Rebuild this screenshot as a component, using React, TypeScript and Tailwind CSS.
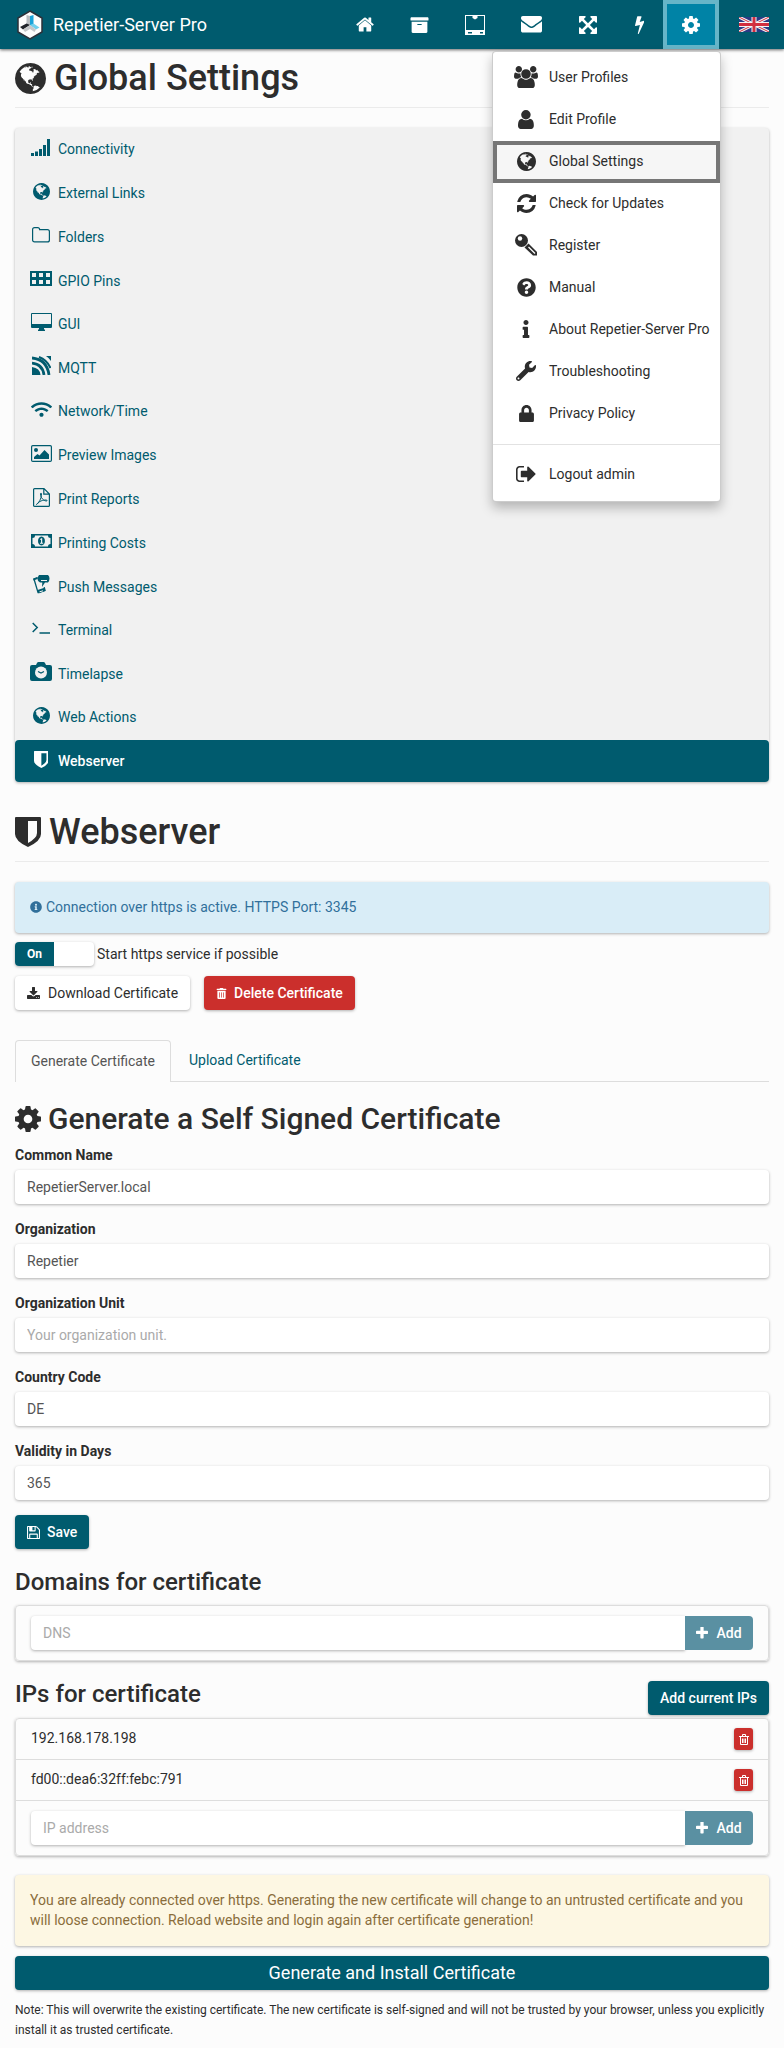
import React, { useState } from 'react';
import {
    FaArchive,
    FaInfo,
    FaInfoCircle,
    FaLock,
    FaQuestionCircle,
    FaTrashAlt,
    FaWifi,
    FaWrench,
} from 'react-icons/fa';

type IconProps = { className?: string };

const paths = {
    home: 'M1472 992v480q0 26-19 45t-45 19h-384v-384h-256v384h-384q-26 0-45-19t-19-45v-480q0-1 .5-3t.5-3l575-474 575 474q1 2 1 6zm223-69l-62 74q-8 9-21 11h-3q-13 0-21-7l-692-577-692 577q-12 8-24 7-13-2-21-11l-62-74q-8-10-7-23.500t11-21.500l719-599q32-26 76-26t76 26l244 204v-195q0-14 9-23t23-9h192q14 0 23 9t9 23v408l219 182q10 8 11 21.500t-7 23.500z',
    cog: 'M1152 896q0-106-75-181t-181-75-181 75-75 181 75 181 181 75 181-75 75-181zm512-109v222q0 12-8 23t-20 13l-185 28q-19 54-39 91 35 50 107 138 10 12 10 25t-9 23q-27 37-99 108t-94 71q-12 0-26-9l-138-108q-44 23-91 38-16 136-29 186-7 28-36 28h-222q-14 0-24.500-8.500t-11.500-21.500l-28-184q-49-16-90-37l-141 107q-10 9-25 9-14 0-25-11-126-114-165-168-7-10-7-23 0-12 8-23 15-21 51-66.500t54-70.500q-27-50-41-99l-183-27q-13-2-21-12.500t-8-23.500v-222q0-12 8-23t19-13l186-28q14-46 39-92-40-57-107-138-10-12-10-24 0-10 9-23 26-36 98.500-107.500t94.500-71.500q13 0 26 10l138 107q44-23 91-38 16-136 29-186 7-28 36-28h222q14 0 24.500 8.500t11.500 21.500l28 184q49 16 90 37l142-107q9-9 24-9 13 0 25 10 129 119 165 170 7 8 7 22 0 12-8 23-15 21-51 66.500t-54 70.500q26 50 41 98l183 28q13 2 21 12.500t8 23.500z',
    envelope: 'M1792 710v794q0 66-47 113t-113 47h-1472q-66 0-113-47t-47-113v-794q44 49 101 87 362 246 497 345 57 42 92.500 65.500t94.500 48 110 24.500h2q51 0 110-24.500t94.500-48 92.500-65.500q170-123 498-345 57-39 100-87zm0-294q0 79-49 151t-122 123q-376 261-468 325-10 7-42.500 30.500t-54 38-52 32.500-57.500 27-50 9h-2q-23 0-50-9t-57.500-27-52-32.500-54-38-42.500-30.500q-91-64-262-182.500t-205-142.500q-62-42-117-115.500t-55-136.500q0-78 41.500-130t118.500-52h1472q65 0 112.500 47t47.500 113z',
    arrows: 'M1411 541l-355 355 355 355 144-144q29-31 70-14 39 17 39 59v448q0 26-19 45t-45 19h-448q-42 0-59-40-17-39 14-69l144-144-355-355-355 355 144 144q31 30 14 69-17 40-59 40h-448q-26 0-45-19t-19-45v-448q0-42 40-59 39-17 69 14l144 144 355-355-355-355-144 144q-19 19-45 19-12 0-24-5-40-17-40-59v-448q0-26 19-45t45-19h448q42 0 59 40 17 39-14 69l-144 144 355 355 355-355-144-144q-31-30-14-69 17-40 59-40h448q26 0 45 19t19 45v448q0 42-39 59-13 5-25 5-26 0-45-19z',
    bolt: 'M1333 566q18 20 7 44l-540 1157q-13 25-42 25-4 0-14-2-17-5-25.500-19t-4.500-30l197-808-406 101q-4 1-12 1-18 0-31-11-18-15-13-39l201-825q4-14 16-23t28-9h328q19 0 32 12.500t13 29.500q0 8-5 18l-171 463 396-98q8-2 12-2 19 0 34 15z',
    globe: 'M896 128q209 0 385.500 103t279.500 279.500 103 385.500-103 385.500-279.500 279.500-385.500 103-385.500-103-279.500-279.500-103-385.500 103-385.500 279.500-279.500 385.500-103zm274 521q-2 1-9.500 9.500t-13.500 9.500q2 0 4.500-5t5-11 3.500-7q6-7 22-15 14-6 52-12 34-8 51 11-2-2 9.500-13t14.500-12q3-2 15-4.500t15-7.500l2-22q-12 1-17.500-7t-6.500-21q0 2-6 8 0-7-4.500-8t-11.500 1-9 1q-10-3-15-7.500t-8-16.500-4-15q-2-5-9.500-11t-9.500-10q-1-2-2.500-5.500t-3-6.500-4-5.500-5.500-2.500-7 5-7.500 10-4.500 5q-3-2-6-1.500t-4.500 1-4.500 3-5 3.500q-3 2-8.500 3t-8.500 2q15-5-1-11-10-4-16-3 9-4 7.500-12t-8.500-14h5q-1-4-8.500-8.500t-17.500-8.500-13-6q-8-5-34-9.500t-33-.5q-5 6-4.500 10.500t4 14 3.500 12.500q1 6-5.500 13t-6.500 12q0 7 14 15.500t10 21.500q-3 8-16 16t-16 12q-5 8-1.500 18.500t10.500 16.500q2 2 1.500 4t-3.500 4.500-5.500 4-6.500 3.500l-3 2q-11 5-20.500-6t-13.500-26q-7-25-16-30-23-8-29 1-5-13-41-26-25-9-58-4 6-1 0-15-7-15-19-12 3-6 4-17.500t1-13.500q3-13 12-23 1-1 7-8.500t9.500-13.500.5-6q35 4 50-11 5-5 11.500-17t10.500-17q9-6 14-5.500t14.500 5.500 14.500 5q14 1 15.500-11t-7.500-20q12 1 3-17-4-7-8-9-12-4-27 5-8 4 2 8-1-1-9.500 10.500t-16.500 17.500-16-5q-1-1-5.500-13.500t-9.500-13.500q-8 0-16 15 3-8-11-15t-24-8q19-12-8-27-7-4-20.500-5t-19.500 4q-5 7-5.500 11.500t5 8 10.500 5.500 11.500 4 8.500 3q14 10 8 14-2 1-8.500 3.500t-11.500 4.500-6 4q-3 4 0 14t-2 14q-5-5-9-17.500t-7-16.500q7 9-25 6l-10-1q-4 0-16 2t-20.500 1-13.500-8q-4-8 0-20 1-4 4-2-4-3-11-9.500t-10-8.500q-46 15-94 41 6 1 12-1 5-2 13-6.500t10-5.500q34-14 42-7l5-5q14 16 20 25-7-4-30-1-20 6-22 12 7 12 5 18-4-3-11.500-10t-14.500-11-15-5q-16 0-22 1-146 80-235 222 7 7 12 8 4 1 5 9t2.500 11 11.500-3q9 8 3 19 1-1 44 27 19 17 21 21 3 11-10 18-1-2-9-9t-9-4q-3 5 .5 18.500t10.500 12.500q-7 0-9.500 16t-2.500 35.500-1 23.500l2 1q-3 12 5.500 34.500t21.500 19.500q-13 3 20 43 6 8 8 9 3 2 12 7.500t15 10 10 10.500q4 5 10 22.500t14 23.500q-2 6 9.500 20t10.500 23q-1 0-2.500 1t-2.500 1q3 7 15.500 14t15.500 13q1 3 2 10t3 11 8 2q2-20-24-62-15-25-17-29-3-5-5.500-15.500t-4.500-14.500q2 0 6 1.500t8.500 3.500 7.500 4 2 3q-3 7 2 17.500t12 18.500 17 19 12 13q6 6 14 19.500t0 13.500q9 0 20 10t17 20q5 8 8 26t5 24q2 7 8.500 13.500t12.500 9.500l16 8 13 7q5 2 18.500 10.500t21.500 11.500q10 4 16 4t14.500-2.500 13.500-3.500q15-2 29 15t21 21q36 19 55 11-2 1 .5 7.500t8 15.500 9 14.500 5.500 8.500q5 6 18 15t18 15q6-4 7-9-3 8 7 20t18 10q14-3 14-32-31 15-49-18 0-1-2.500-5.500t-4-8.500-2.500-8.500 0-7.500 5-3q9 0 10-3.500t-2-12.500-4-13q-1-8-11-20t-12-15q-5 9-16 8t-16-9q0 1-1.500 5.500t-1.500 6.500q-13 0-15-1 1-3 2.500-17.500t3.500-22.500q1-4 5.500-12t7.500-14.500 4-12.500-4.500-9.500-17.500-2.500q-19 1-26 20-1 3-3 10.500t-5 11.500-9 7q-7 3-24 2t-24-5q-13-8-22.500-29t-9.500-37q0-10 2.500-26.500t3-25-5.500-24.500q3-2 9-9.500t10-10.500q2-1 4.500-1.500t4.500 0 4-1.500 3-6q-1-1-4-3-3-3-4-3 7 3 28.500-1.500t27.500 1.500q15 11 22-2 0-1-2.500-9.500t-.5-13.500q5 27 29 9 3 3 15.500 5t17.500 5q3 2 7 5.500t5.500 4.500 5-.5 8.500-6.500q10 14 12 24 11 40 19 44 7 3 11 2t4.500-9.500 0-14-1.500-12.500l-1-8v-18l-1-8q-15-3-18.500-12t1.500-18.500 15-18.500q1-1 8-3.500t15.500-6.500 12.500-8q21-19 15-35 7 0 11-9-1 0-5-3t-7.500-5-4.500-2q9-5 2-16 5-3 7.500-11t7.500-10q9 12 21 2 7-8 1-16 5-7 20.500-10.500t18.500-9.500q7 2 8-2t1-12 3-12q4-5 15-9t13-5l17-11q3-4 0-4 18 2 31-11 10-11-6-20 3-6-3-9.500t-15-5.500q3-1 11.500-.5t10.500-1.500q15-10-7-16-17-5-43 12zm-163 877q206-36 351-189-3-3-12.500-4.500t-12.500-3.500q-18-7-24-8 1-7-2.500-13t-8-9-12.500-8-11-7q-2-2-7-6t-7-5.500-7.500-4.500-8.500-2-10 1l-3 1q-3 1-5.500 2.500t-5.500 3-4 3 0 2.500q-21-17-36-22-5-1-11-5.500t-10.500-7-10-1.500-11.500 7q-5 5-6 15t-2 13q-7-5 0-17.500t2-18.500q-3-6-10.500-4.500t-12 4.500-11.500 8.500-9 6.500-8.500 5.500-8.500 7.500q-3 4-6 12t-5 11q-2-4-11.500-6.500t-9.500-5.500q2 10 4 35t5 38q7 31-12 48-27 25-29 40-4 22 12 26 0 7-8 20.500t-7 21.500q0 6 2 16z',
    users: 'M593 896q-162 5-265 128h-134q-82 0-138-40.500t-56-118.500q0-353 124-353 6 0 43.500 21t97.500 42.500 119 21.500q67 0 133-23-5 37-5 66 0 139 81 256zm1071 637q0 120-73 189.500t-194 69.500h-874q-121 0-194-69.500t-73-189.500q0-53 3.500-103.500t14-109 26.500-108.500 43-97.500 62-81 85.500-53.500 111.500-20q10 0 43 21.500t73 48 107 48 135 21.500 135-21.500 107-48 73-48 43-21.500q61 0 111.500 20t85.500 53.500 62 81 43 97.500 26.500 108.500 14 109 3.500 103.500zm-1024-1277q0 106-75 181t-181 75-181-75-75-181 75-181 181-75 181 75 75 181zm704 384q0 159-112.500 271.500t-271.500 112.500-271.500-112.500-112.500-271.500 112.500-271.500 271.500-112.500 271.500 112.500 112.500 271.500zm576 225q0 78-56 118.500t-138 40.500h-134q-103-123-265-128 81-117 81-256 0-29-5-66 66 23 133 23 59 0 119-21.500t97.500-42.500 43.500-21q124 0 124 353zm-128-609q0 106-75 181t-181 75-181-75-75-181 75-181 181-75 181 75 75 181z',
    user: 'M1536 1399q0 109-62.500 187t-150.500 78h-854q-88 0-150.500-78t-62.500-187q0-85 8.500-160.500t31.500-152 58.500-131 94-89 134.500-34.500q131 128 313 128t313-128q76 0 134.500 34.500t94 89 58.500 131 31.500 152 8.500 160.500zm-256-887q0 159-112.500 271.500t-271.500 112.500-271.500-112.500-112.500-271.500 112.500-271.500 271.500-112.500 271.500 112.500 112.500 271.500z',
    refresh: 'M1639 1056q0 5-1 7-64 268-268 434.500t-478 166.500q-146 0-282.500-55t-243.500-157l-129 129q-19 19-45 19t-45-19-19-45v-448q0-26 19-45t45-19h448q26 0 45 19t19 45-19 45l-137 137q71 66 161 102t187 36q134 0 250-65t186-179q11-17 53-117 8-23 30-23h192q13 0 22.500 9.500t9.500 22.500zm25-800v448q0 26-19 45t-45 19h-448q-26 0-45-19t-19-45 19-45l138-138q-148-137-349-137-134 0-250 65t-186 179q-11 17-53 117-8 23-30 23h-199q-13 0-22.500-9.500t-9.500-22.500v-7q65-268 270-434.500t480-166.500q146 0 284 55.500t245 156.500l130-129q19-19 45-19t45 19 19 45z',
    signOut: 'M704 1440q0 4 1 20t.5 26.500-3 23.500-10 19.500-20.500 6.500h-320q-119 0-203.500-84.500t-84.500-203.500v-704q0-119 84.500-203.500t203.500-84.500h320q13 0 22.500 9.500t9.500 22.500q0 4 1 20t.5 26.500-3 23.500-10 19.500-20.500 6.500h-320q-66 0-113 47t-47 113v704q0 66 47 113t113 47h312l11.500 1 11.500 3 8 5.500 7 9 2 13.500zm928-544q0 26-19 45l-544 544q-19 19-45 19t-45-19-19-45v-288h-448q-26 0-45-19t-19-45v-384q0-26 19-45t45-19h448v-288q0-26 19-45t45-19 45 19l544 544q19 19 19 45z',
    plus: 'M1600 736v192q0 40-28 68t-68 28h-416v416q0 40-28 68t-68 28h-192q-40 0-68-28t-28-68v-416h-416q-40 0-68-28t-28-68v-192q0-40 28-68t68-28h416v-416q0-40 28-68t68-28h192q40 0 68 28t28 68v416h416q40 0 68 28t28 68z',
    download: 'M1344 1344q0-26-19-45t-45-19-45 19-19 45 19 45 45 19 45-19 19-45zm256 0q0-26-19-45t-45-19-45 19-19 45 19 45 45 19 45-19 19-45zm128-224v320q0 40-28 68t-68 28h-1472q-40 0-68-28t-28-68v-320q0-40 28-68t68-28h465l135 136q58 56 136 56t136-56l136-136h464q40 0 68 28t28 68zm-325-569q17 41-14 70l-448 448q-18 19-45 19t-45-19l-448-448q-31-29-14-70 17-39 59-39h256v-448q0-26 19-45t45-19h256q26 0 45 19t19 45v448h256q42 0 59 39z',
    save: 'M512 1536h768v-384h-768v384zm896 0h128v-896q0-14-10-38.500t-20-34.500l-281-281q-10-10-34-20t-39-10v416q0 40-28 68t-68 28h-576q-40 0-68-28t-28-68v-416h-128v1280h128v-416q0-40 28-68t68-28h832q40 0 68 28t28 68v416zm-384-928v-320q0-13-9.500-22.500t-22.500-9.500h-192q-13 0-22.500 9.500t-9.500 22.500v320q0 13 9.500 22.500t22.500 9.500h192q13 0 22.500-9.500t9.500-22.500zm640 32v928q0 40-28 68t-68 28h-1344q-40 0-68-28t-28-68v-1344q0-40 28-68t68-28h928q40 0 88 20t76 48l280 280q28 28 48 76t20 88z',
};

// viewBox defaults to the common 1792 glyph grid
const Glyph: React.FC<IconProps & { name: keyof typeof paths; box?: string }> = ({ name, box = '0 0 1792 1792', className }) => (
    <svg viewBox={box} fill="currentColor" className={className} aria-hidden="true">
        <path d={paths[name]} />
    </svg>
);

const HomeIcon: React.FC<IconProps> = (p) => <Glyph name="home" box="64 200 1664 1400" {...p} />;
const CogIcon: React.FC<IconProps> = (p) => <Glyph name="cog" box="128 128 1536 1536" {...p} />;
const GlobeIcon: React.FC<IconProps> = (p) => <Glyph name="globe" box="128 128 1536 1536" {...p} />;
const EnvelopeIcon: React.FC<IconProps> = (p) => <Glyph name="envelope" box="0 256 1792 1408" {...p} />;
const ArrowsIcon: React.FC<IconProps> = (p) => <Glyph name="arrows" box="128 128 1536 1536" {...p} />;
const BoltIcon: React.FC<IconProps> = (p) => <Glyph name="bolt" box="448 0 900 1792" {...p} />;
const UsersIcon: React.FC<IconProps> = (p) => <Glyph name="users" box="0 0 1920 1792" {...p} />;
const UserIcon: React.FC<IconProps> = (p) => <Glyph name="user" box="256 128 1280 1536" {...p} />;
const RefreshIcon: React.FC<IconProps> = (p) => <Glyph name="refresh" box="128 128 1536 1536" {...p} />;
const SignOutIcon: React.FC<IconProps> = (p) => <Glyph name="signOut" box="64 256 1600 1280" {...p} />;
const PlusIcon: React.FC<IconProps> = (p) => <Glyph name="plus" box="192 192 1408 1408" {...p} />;
const DownloadIcon: React.FC<IconProps> = (p) => <Glyph name="download" box="64 0 1664 1536" {...p} />;
const SaveIcon: React.FC<IconProps> = (p) => <Glyph name="save" box="128 128 1536 1536" {...p} />;

const ShieldIcon: React.FC<IconProps> = ({ className }) => (
    <svg viewBox="0 0 26 30" fill="currentColor" fillRule="evenodd" className={className} aria-hidden="true">
        <path d="M1 0H25Q26 0 26 1V17Q26 24 13 30Q0 24 0 17V1Q0 0 1 0ZM13 4V26Q22 21 22 16V4Z" />
    </svg>
);

const SignalIcon: React.FC<IconProps> = ({ className }) => (
    <svg viewBox="0 0 20 17" fill="currentColor" className={className} aria-hidden="true">
        <path d="M0 14h3v3H0zM4 12.500h3V17H4zM8 10h3v7H8zM12 6h3v11h-3zM16 0h3v17h-3z" />
    </svg>
);

const FolderIcon: React.FC<IconProps> = ({ className }) => (
    <svg viewBox="0 0 18 16" fill="none" stroke="currentColor" strokeWidth="1.200" className={className} aria-hidden="true">
        <path d="M.6 2.600q0-2 2-2h3q2 0 2 2h7.800q2 0 2 2v8.300q0 2-2 2H2.600q-2 0-2-2z" />
    </svg>
);

const GridIcon: React.FC<IconProps> = ({ className }) => (
    <svg viewBox="0 0 22 15" fill="currentColor" fillRule="evenodd" className={className} aria-hidden="true">
        <path d="M0 0h22v15H0zM2 2v4h4V2zM9 2v4h4V2zM16 2v4h4V2zM2 9v4h4V9zM9 9v4h4V9zM16 9v4h4V9z" />
    </svg>
);

const DesktopIcon: React.FC<IconProps> = ({ className }) => (
    <svg viewBox="0 0 21 18" fill="currentColor" fillRule="evenodd" className={className} aria-hidden="true">
        <path d="M1 0h19q1 0 1 1v13q0 1-1 1h-7v1l1 1v1H7v-1l1-1v-1H1q-1 0-1-1V1q0-1 1-1zM1 1v10h19V1z" />
    </svg>
);

const MqttIcon: React.FC<IconProps> = ({ className }) => (
    <svg viewBox="0 0 19 19" className={className} aria-hidden="true">
        <path d="M0 11q8 1 8.500 8H0zM14 0h5v5q-2-3-5-5z" fill="currentColor" />
        <path d="M0 7.200Q10.500 8 12 19M0 2Q15 3.500 17 19" fill="none" stroke="currentColor" strokeWidth="2.800" />
        <path d="M7 1Q15 4 18.500 12" fill="none" stroke="currentColor" strokeWidth="2" />
    </svg>
);

const ImageIcon: React.FC<IconProps> = ({ className }) => (
    <svg viewBox="0 0 21 17" className={className} aria-hidden="true">
        <rect x=".6" y=".6" width="19.800" height="15.800" rx="1.200" fill="none" stroke="currentColor" strokeWidth="1.200" />
        <circle cx="5" cy="5" r="2" fill="currentColor" />
        <path d="M3 14v-2l3.500-3 2 1.500L13.500 5 18 9.500V14z" fill="currentColor" />
    </svg>
);

const PdfIcon: React.FC<IconProps> = ({ className }) => (
    <svg viewBox="0 0 17 19" fill="none" stroke="currentColor" strokeWidth="1.200" className={className} aria-hidden="true">
        <path d="M1.600.6h9.400l5.400 5.400v11.400q0 1-1 1H1.600q-1 0-1-1V1.600q0-1 1-1zM10.800.6v5.600h5.600" />
        <path d="M3.500 16.500c2-1 5-6 5-10.500 0-1.200-1-1.200-1 0 0 3.500 3 7 6 7 1 0 .8-1-.5-1-3 0-7 1-9.500 4.500z" strokeWidth="1" />
    </svg>
);

const MoneyIcon: React.FC<IconProps> = ({ className }) => (
    <svg viewBox="0 0 21 14" fill="currentColor" fillRule="evenodd" className={className} aria-hidden="true">
        <path d="M0 0h21v14H0zM4 1.500Q4 4 1.500 4v6Q4 10 4 12.500h13Q17 10 19.500 10V4Q17 4 17 1.500z" />
        <path d="M10.500 2.500c4.600 0 4.600 9 0 9s-4.600-9 0-9zM9 5.200l.6.800.4-.3v3.100H9v1h3.200v-1h-1V4.200h-1z" />
    </svg>
);

const PushIcon: React.FC<IconProps> = ({ className }) => (
    <svg viewBox="0 0 17 19" fill="currentColor" className={className} aria-hidden="true">
        <path d="M1 4l3.500-1.200M1 4l4 13.500 7-2.300-.8-3" fill="none" stroke="currentColor" strokeWidth="1.300" />
        <path d="M4.500 15l7-2.300 1 3.300-7 2.500zM0 3.500l4.500-1.500v2L.5 5.500z" />
        <path d="M6 0h9q1.500 1 1.500 3.500T15 7.500h-3L9 12l.3-4.500H7Q4.500 6 4.500 4T6 0z" />
        <path d="M8 5.500h6M6.500 16.800l3.500-1" stroke="#f1f1f1" strokeWidth="1" />
    </svg>
);

const TerminalIcon: React.FC<IconProps> = ({ className }) => (
    <svg viewBox="0 0 18 12" fill="none" stroke="currentColor" strokeWidth="1.500" className={className} aria-hidden="true">
        <path d="M.7 1l4.500 4.500L.7 10M7.500 11H18" />
    </svg>
);

const CameraIcon: React.FC<IconProps> = ({ className }) => (
    <svg viewBox="0 0 22 19" className={className} aria-hidden="true">
        <path d="M2 3h4l1-2q.5-1 1.500-1h5q1 0 1.500 1l1 2h4q2 0 2 2v12q0 2-2 2H2q-2 0-2-2V5q0-2 2-2z" fill="currentColor" />
        <circle cx="11" cy="10.500" r="6" fill="#f1f1f1" />
        <path d="M8 9.500l3 1.500 3-1.500" fill="none" stroke="currentColor" strokeWidth="1.200" />
    </svg>
);

const TrashIcon: React.FC<IconProps> = ({ className }) => (
    <svg viewBox="0 0 10 11" fill="none" stroke="currentColor" className={className} aria-hidden="true">
        <path d="M0 2.500h10M3.500 2V.5h3V2M1.500 3v7.500h7V3M3.500 4.500V9M5 4.500V9M6.500 4.500V9" />
    </svg>
);

const PrinterIcon: React.FC<IconProps> = ({ className }) => (
    <svg viewBox="0 0 20 20" fill="currentColor" fillRule="evenodd" className={className} aria-hidden="true">
        <path d="M0 0h20v20H0zM1 1v14h18V1h-6.500v2L10 4.500 7.500 3V1zM3 17v1.500h4V17zM15 17v1.500h3V17z" />
    </svg>
);

const KeyIcon: React.FC<IconProps> = ({ className }) => (
    <svg viewBox="0 0 22 22" className={className} aria-hidden="true">
        <circle cx="6.500" cy="6.500" r="6.500" fill="currentColor" />
        <circle cx="5" cy="4.500" r="2.200" fill="#fff" />
        <path d="M9.500 13.500l4-4 8.500 8.500v3.500h-4z" fill="currentColor" />
        <path d="M13.500 13l6.500 6.500" stroke="#fff" strokeWidth="1.200" />
    </svg>
);

const LogoIcon: React.FC<IconProps> = ({ className }) => (
    <svg viewBox="0 0 26 30" className={className} aria-hidden="true">
        <path d="M13 1l12 7v14l-12 7-12-7V8z" fill="#fdfdfd" stroke="#2b3038" strokeWidth="1.500" />
        <path d="M9.500 5l3.500 1v9l-3.500 2z" fill="#b7bcbf" />
        <path d="M13 6l3.500-1v12L13 15z" fill="#1aa3d9" />
        <path d="M13 15l3.500-1.500 6 4L19 19.500z" fill="#6fd0ee" />
        <path d="M9.500 13.500L13 15l-7 4.500-3-2.500z" fill="#20242a" />
        <path d="M13 15l6 4.500-1.500 2.500-4.500-3zM13 15v4l-5 3-2-2.500z" fill="#c5c8ca" />
    </svg>
);

const FlagIcon: React.FC<IconProps> = ({ className }) => (
    <svg viewBox="0 0 30 15" className={className} aria-hidden="true">
        <path d="M0 0h30v15H0z" fill="#2b3a85" />
        <path d="M0 0l30 15M30 0L0 15" stroke="#f4f4f4" strokeWidth="3" />
        <path d="M0 0l30 15M30 0L0 15" stroke="#d22f3f" strokeWidth="1" />
        <path d="M15 0v15M0 7.500h30" stroke="#f4f4f4" strokeWidth="5" />
        <path d="M15 0v15M0 7.500h30" stroke="#d22f3f" strokeWidth="3" />
    </svg>
);

const navItems = [
    { label: 'Home', width: 'w-[54px]', icon: <HomeIcon className="w-[18px]" /> },
    { label: 'Print archive', width: 'w-[54px]', icon: <FaArchive className="h-[18px] w-[19px]" /> },
    { label: 'Printers', width: 'w-[58px]', icon: <PrinterIcon className="w-5" /> },
    { label: 'Messages', width: 'w-[55px]', icon: <EnvelopeIcon className="w-[21px]" /> },
    { label: 'Fullscreen', width: 'w-[57px]', icon: <ArrowsIcon className="w-[18px]" /> },
    { label: 'Power', width: 'w-[47px]', icon: <BoltIcon className="h-[19px]" /> },
];

const profileMenu = [
    { label: 'User Profiles', icon: <UsersIcon className="w-6" /> },
    { label: 'Edit Profile', icon: <UserIcon className="h-[19px]" /> },
    { label: 'Global Settings', icon: <GlobeIcon className="w-[19px]" />, current: true },
    { label: 'Check for Updates', icon: <RefreshIcon className="w-[19px]" /> },
    { label: 'Register', icon: <KeyIcon className="w-[22px]" /> },
    { label: 'Manual', icon: <FaQuestionCircle className="size-[19px]" /> },
    { label: 'About Repetier-Server Pro', icon: <FaInfo className="size-[18px]" /> },
    { label: 'Troubleshooting', icon: <FaWrench className="size-5" /> },
    { label: 'Privacy Policy', icon: <FaLock className="size-[17px]" /> },
];

const settingsPages = [
    { label: 'Connectivity', icon: <SignalIcon className="w-5" /> },
    { label: 'External Links', icon: <GlobeIcon className="w-[17px]" /> },
    { label: 'Folders', icon: <FolderIcon className="w-[18px]" /> },
    { label: 'GPIO Pins', icon: <GridIcon className="w-[22px]" />, compact: true },
    { label: 'GUI', icon: <DesktopIcon className="w-[21px]" /> },
    { label: 'MQTT', icon: <MqttIcon className="w-[19px]" />, compact: true },
    { label: 'Network/Time', icon: <FaWifi className="h-[17px] w-[21px]" /> },
    { label: 'Preview Images', icon: <ImageIcon className="w-[21px]" /> },
    { label: 'Print Reports', icon: <PdfIcon className="w-[17px]" /> },
    { label: 'Printing Costs', icon: <MoneyIcon className="w-[21px]" /> },
    { label: 'Push Messages', icon: <PushIcon className="w-[17px]" />, compact: true },
    { label: 'Terminal', icon: <TerminalIcon className="w-[18px]" /> },
    { label: 'Timelapse', icon: <CameraIcon className="w-[22px]" />, compact: true },
    { label: 'Web Actions', icon: <GlobeIcon className="w-[17px]" /> },
];

const fields = [
    { id: 'commonName', label: 'Common Name', value: 'RepetierServer.local' },
    { id: 'organization', label: 'Organization', value: 'Repetier' },
    { id: 'organizationUnit', label: 'Organization Unit', value: '', placeholder: 'Your organization unit.' },
    { id: 'countryCode', label: 'Country Code', value: 'DE' },
    { id: 'validity', label: 'Validity in Days', value: '365' },
];

const ips = ['192.168.178.198', 'fd00::dea6:32ff:febc:791'];

const raised = 'shadow-[0_1px_3px_rgba(0,0,0,0.3)]';
const inputClass = `min-w-0 bg-white px-3 text-[#555] placeholder:text-[#aaa] outline-none ${raised}`;
const buttonClass = `flex h-[34px] items-center rounded px-3 ${raised}`;

const Navbar: React.FC = () => (
    <nav className="relative flex h-[49px] items-stretch bg-[#005b6e] text-white shadow-[0_1px_3px_rgba(0,0,0,0.6)]">
        <a href="#home" className="flex items-center gap-[10px] pl-[17px] text-[18px]">
            <LogoIcon className="w-[26px]" />
            <span>Repetier-Server Pro</span>
        </a>
        <div className="ml-auto flex">
            {navItems.map((item) => (
                <button key={item.label} type="button" aria-label={item.label} className={`flex items-center justify-center ${item.width}`}>
                    {item.icon}
                </button>
            ))}
            <button type="button" aria-label="Settings" aria-expanded="true" className="flex w-14 items-center justify-center border-4 border-[#66b5c8] bg-[#0083a6]">
                <CogIcon className="w-[18px]" />
            </button>
            <button type="button" aria-label="Language" className="flex items-center pr-[15px] pl-5">
                <FlagIcon className="w-[30px]" />
            </button>
        </div>
        <ProfileMenu />
    </nav>
);

const ProfileMenu: React.FC = () => (
    <div className="absolute top-[51px] right-[63px] z-10 w-[229px] rounded border border-black/20 bg-white py-[5px] text-[#2d2d2d] shadow-[0_6px_12px_rgba(0,0,0,0.25)]">
        {profileMenu.map((item) => (
            <a
                key={item.label}
                href="#menu"
                className={`flex h-[42px] items-center pb-0.5 whitespace-nowrap ${item.current ? 'border-4 border-[#767676] bg-[#f6f6f6] pl-3' : 'pl-4'}`}
            >
                <span className="flex w-[34px] justify-center">{item.icon}</span>
                <span className="pl-[6px]">{item.label}</span>
            </a>
        ))}
        <div className="my-[9px] h-px bg-[#e2e2e2]" />
        <a href="#logout" className="flex h-[42px] items-center pb-0.5 pl-4">
            <span className="flex w-[34px] justify-center">
                <SignOutIcon className="w-5" />
            </span>
            <span className="pl-[6px]">Logout admin</span>
        </a>
    </div>
);

const SettingsList: React.FC = () => (
    <div className={`mt-5 rounded bg-[#f1f1f1] text-[#005b6e] ${raised}`}>
        {settingsPages.map((page) => (
            <a key={page.label} href="#page" className={`flex items-center pb-0.5 pl-[15px] ${page.compact ? 'h-[43px]' : 'h-11'}`}>
                <span className="flex h-7 w-[22px] items-center justify-center pb-1">{page.icon}</span>
                <span className="pl-[6px]">{page.label}</span>
            </a>
        ))}
        <a href="#webserver" className="flex h-[42px] items-center rounded bg-[#005b6e] pl-[15px] font-medium text-white">
            <span className="flex h-7 w-[22px] items-center justify-center pb-1">
                <ShieldIcon className="h-[17px]" />
            </span>
            <span className="pl-[6px]">Webserver</span>
        </a>
    </div>
);

const AddRow: React.FC<{ label: string }> = ({ label }) => (
    <div className="flex px-[15px] py-[10px]">
        <input aria-label={label} placeholder={label} className={`${inputClass} h-[34px] flex-1 rounded-l`} />
        <button type="button" disabled className="flex h-[34px] w-[68px] items-center justify-center gap-2 rounded-r bg-[#5a90a2] font-medium text-white">
            <PlusIcon className="w-3" />
            Add
        </button>
    </div>
);

const CertificateForm: React.FC = () => {
    const [values, setValues] = useState<Record<string, string>>(Object.fromEntries(fields.map((f) => [f.id, f.value])));

    return (
        <form>
            {fields.map((field) => (
                <div key={field.id} className="mb-[15px]">
                    <label htmlFor={field.id} className="mb-[5px] block leading-5 font-bold">
                        {field.label}
                    </label>
                    <input
                        id={field.id}
                        value={values[field.id]}
                        placeholder={field.placeholder}
                        onChange={(e) => setValues({ ...values, [field.id]: e.target.value })}
                        className={`${inputClass} block h-[34px] w-full rounded`}
                    />
                </div>
            ))}
            <button type="button" className={`${buttonClass} gap-[7px] bg-[#005b6e] font-medium text-white`}>
                <SaveIcon className="w-[13px]" />
                Save
            </button>
        </form>
    );
};

const App: React.FC = () => {
    const [https, setHttps] = useState(true);

    return (
        <div className="min-h-screen bg-[#fcfcfc] pb-2 font-[Roboto,sans-serif] text-[14px] leading-5 text-[#2d2d2d]">
            <Navbar />
            <main className="px-[15px]">
                <h1 className="flex h-[59px] items-center gap-2 border-b border-[#ebebeb] text-[36px] font-medium">
                    <GlobeIcon className="w-[31px]" />
                    Global Settings
                </h1>
                <SettingsList />

                <h1 className="mt-5 flex h-[60px] items-center gap-2 border-b border-[#ebebeb] text-[36px] font-medium">
                    <ShieldIcon className="w-[26px]" />
                    Webserver
                </h1>
                <div className={`mt-5 flex h-[51px] items-center gap-1 rounded bg-[#d9edf7] px-[15px] pb-0.5 text-[#31709b] ${raised}`}>
                    <FaInfoCircle className="size-3" />
                    Connection over https is active. HTTPS Port: 3345
                </div>

                <label className="mt-[9px] flex w-fit items-center gap-[3px]">
                    <input type="checkbox" checked={https} onChange={() => setHttps(!https)} className="peer sr-only" />
                    <span className={`flex h-6 w-[79px] overflow-hidden rounded bg-white ${raised}`}>
                        <span className="flex w-[39px] items-center justify-center bg-[#005b6e] text-[12px] font-bold text-white">On</span>
                    </span>
                    Start https service if possible
                </label>
                <div className="mt-[10px] flex gap-[14px]">
                    <button type="button" className={`${buttonClass} gap-2 bg-white`}>
                        <DownloadIcon className="w-[13px]" />
                        Download Certificate
                    </button>
                    <button type="button" className={`${buttonClass} gap-[7px] bg-[#cb2f2c] font-medium text-white`}>
                        <FaTrashAlt className="size-[11px]" />
                        Delete Certificate
                    </button>
                </div>

                <div role="tablist" className="mt-[30px] flex h-[42px] border-b border-[#ddd]">
                    <button type="button" role="tab" aria-selected="true" className="-mb-px rounded-t border border-b-0 border-[#ddd] bg-[#fcfcfc] px-[15px] pb-0.5 text-[#555]">
                        Generate Certificate
                    </button>
                    <button type="button" role="tab" aria-selected="false" className="px-[18px] pb-0.5 text-[#005b6e]">
                        Upload Certificate
                    </button>
                </div>

                <h2 className="mt-[21px] mb-[10px] flex h-8 items-center gap-[7px] text-[30px] font-medium">
                    <CogIcon className="w-[26px]" />
                    Generate a Self Signed Certificate
                </h2>
                <CertificateForm />

                <h3 className="mt-5 mb-[10px] text-[24px] leading-[26px] font-medium">Domains for certificate</h3>
                <div className={`rounded border border-[#ddd] ${raised}`}>
                    <AddRow label="DNS" />
                </div>

                <div className="mt-5 flex items-start justify-between">
                    <h3 className="text-[24px] leading-[26px] font-medium">IPs for certificate</h3>
                    <button type="button" className={`${buttonClass} bg-[#005b6e] font-medium text-white`}>
                        Add current IPs
                    </button>
                </div>
                <div className={`mt-[3px] rounded border border-[#ddd] ${raised}`}>
                    {ips.map((ip) => (
                        <div key={ip} className="flex h-[41px] items-center justify-between border-b border-[#ddd] px-[15px]">
                            <span className="pb-0.5">{ip}</span>
                            <button type="button" aria-label={`Delete ${ip}`} className={`flex h-[22px] w-[19px] items-center justify-center rounded-[3px] bg-[#cb2f2c] text-white ${raised}`}>
                                <TrashIcon className="w-[10px]" />
                            </button>
                        </div>
                    ))}
                    <AddRow label="IP address" />
                </div>

                <div className={`mt-[19px] rounded bg-[#fdf7e3] px-[15px] pt-[15px] pb-4 text-[#8a6d3b] ${raised}`}>
                    You are already connected over https. Generating the new certificate will change to an untrusted certificate and you will loose connection. Reload website and login again after certificate generation!
                </div>
                <button type="button" className={`mt-[10px] block h-[34px] w-full rounded bg-[#005b6e] text-[18px] text-white ${raised}`}>
                    Generate and Install Certificate
                </button>
                <p className="mt-[10px] text-[12px] leading-5">
                    Note: This will overwrite the existing certificate. The new certificate is self-signed and will not be trusted by your browser, unless you explicitly install it as trusted certificate.
                </p>
            </main>
        </div>
    );
};

export default App;
